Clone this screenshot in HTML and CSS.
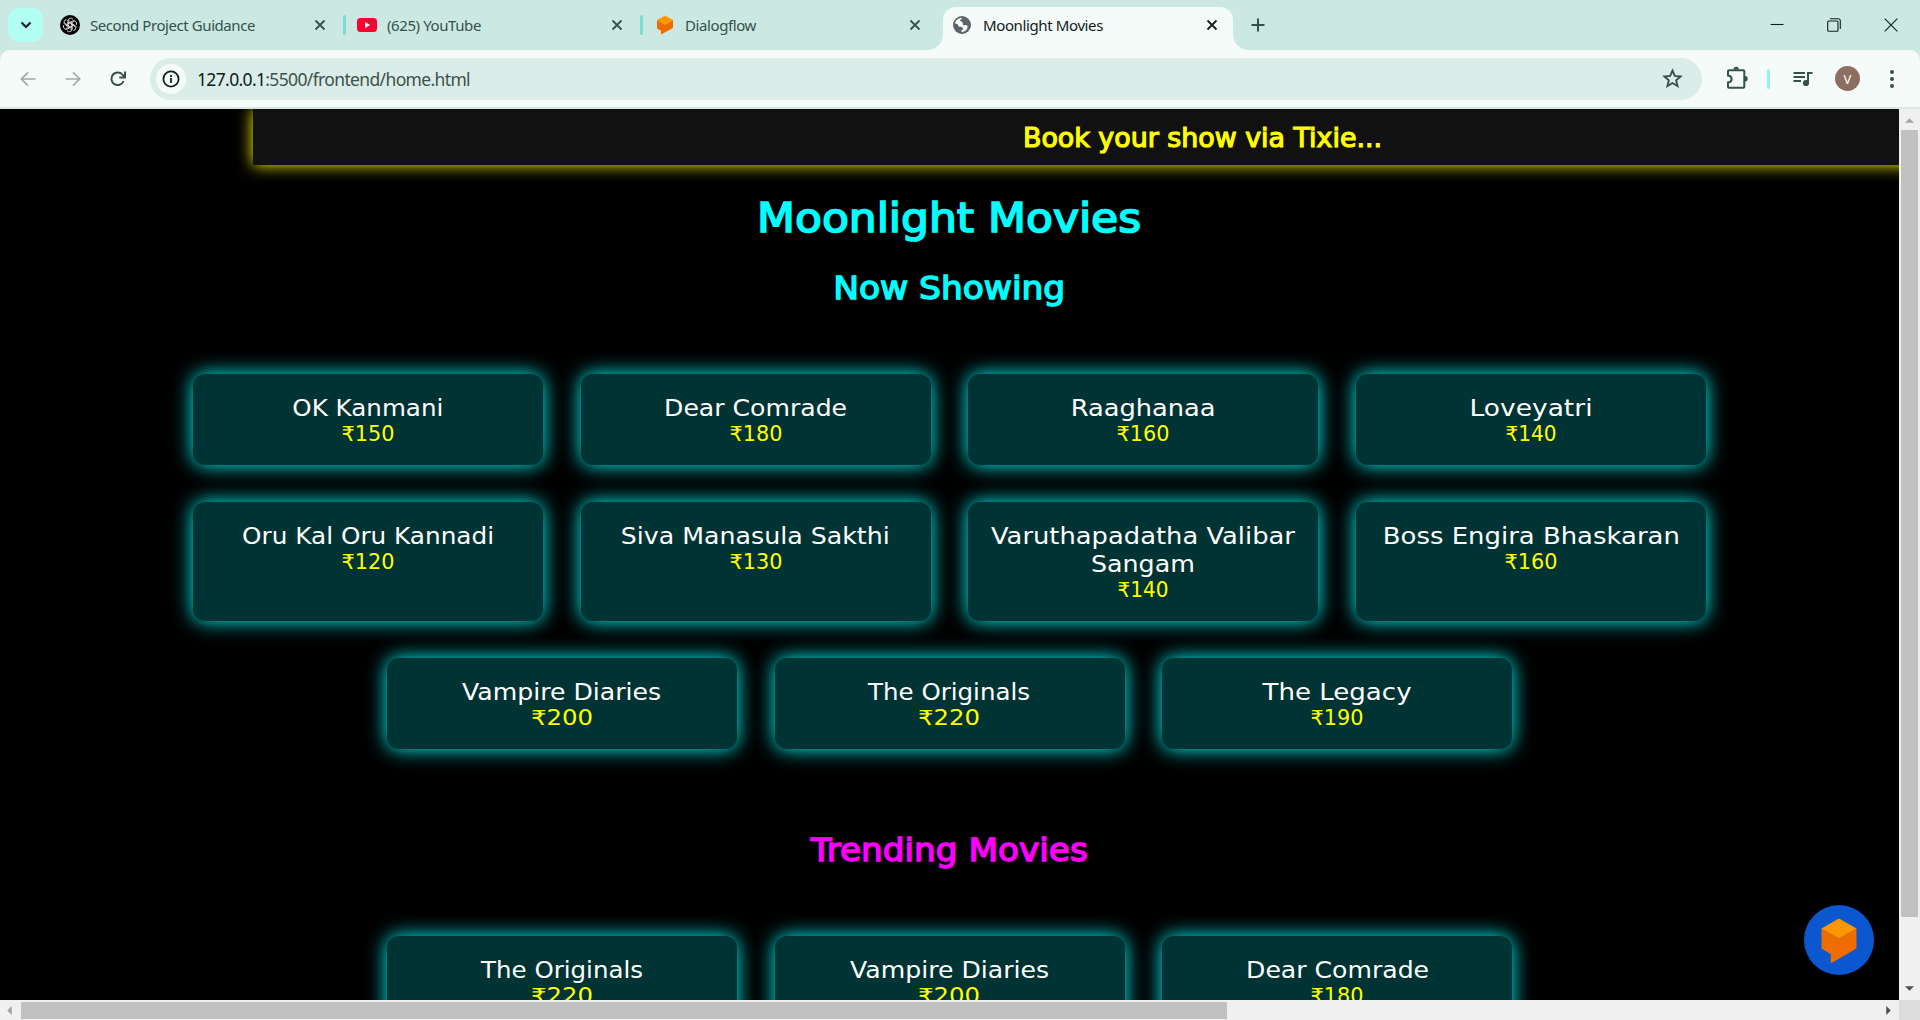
FILE: index.html
```html
<!DOCTYPE html>
<html lang="en">
<head>
<meta charset="utf-8">
<title>Moonlight Movies</title>
<link rel="stylesheet" href="styles.css">
</head>
<body>
<div class="browser">
  <header class="tabbar">
    <div class="tab-search"><svg width="12" height="8" viewBox="0 0 12 8"><path d="M1.5 1.5 6 6l4.5-4.5" fill="none" stroke="#10201c" stroke-width="2.2"/></svg></div>
    <div class="tab">
      <svg class="favicon" viewBox="0 0 20 20"><circle cx="10" cy="10" r="10" fill="#000"/><g fill="none" stroke="#fff" stroke-width=".8"><path id="petal" d="M7.800 11.300V6a2.900 2.900 0 0 1 5.200-1.700M9.800 8.800l4.300-2.500"/><use href="#petal" transform="rotate(60 10 10)"/><use href="#petal" transform="rotate(120 10 10)"/><use href="#petal" transform="rotate(180 10 10)"/><use href="#petal" transform="rotate(240 10 10)"/><use href="#petal" transform="rotate(300 10 10)"/></g></svg>
      <span class="tab-title" data-w="165">Second Project Guidance</span>
      <svg class="close" viewBox="0 0 12 12"><path d="m1.5 1.5 9 9m0-9-9 9"/></svg>
    </div>
    <i class="tab-sep"></i>
    <div class="tab second">
      <svg class="favicon" viewBox="0 0 20 20"><rect y="3" width="20" height="14" rx="3.5" fill="#ff0033"/><path d="m8 7 5.2 3L8 13z" fill="#fff"/></svg>
      <span class="tab-title" data-w="94">(625) YouTube</span>
      <svg class="close" viewBox="0 0 12 12"><path d="m1.5 1.5 9 9m0-9-9 9"/></svg>
    </div>
    <i class="tab-sep"></i>
    <div class="tab third">
      <svg class="favicon" viewBox="0 0 20 20"><path d="M2 5v8.500l4 2.300V19.500L18 13V5l-8 4.500z" fill="#ef6c00"/><path d="m10 .5 8 4.500-8 4.700L2 5z" fill="#ff9800"/></svg>
      <span class="tab-title" data-w="71">Dialogflow</span>
      <svg class="close" viewBox="0 0 12 12"><path d="m1.500 1.500 9 9m0-9-9 9"/></svg>
    </div>
    <div class="tab active">
      <svg class="favicon" viewBox="0 0 20 20"><circle cx="10" cy="10" r="9" fill="#5f6368"/><path d="M3 8.500C3.500 5 6.500 2.700 10.500 3c-1 1-2.500 1.500-2.300 2.800.3 1 2 .6 2.500 1.600.5 1-.6 2 .6 2.600 1.200.5 2-.2 3.200.3 1.200.6 1.500 2 .6 3.400-1.100 1.900-3.100 3.400-6 3.100.3-1.300.7-1.800 1.500-2.300.9-.7.6-2-.6-2.300-1.300-.3-2.300.2-3.200-.7C6 10.500 6.600 8.800 3 8.500z" fill="#f4fbf8"/></svg>
      <span class="tab-title" data-w="120">Moonlight Movies</span>
      <svg class="close" viewBox="0 0 12 12"><path d="m1.500 1.500 9 9m0-9-9 9"/></svg>
    </div>
    <svg class="new-tab" viewBox="0 0 14 14"><path d="M7 .5v13M.5 7h13"/></svg>
    <div class="window-buttons">
      <svg viewBox="0 0 14 14"><path d="M.5 6.500h13"/></svg>
      <svg viewBox="0 0 14 14"><rect x=".7" y="3" width="10.300" height="10.300" rx="1"/><path d="M3 .8h8.300a2 2 0 0 1 2 2V11"/></svg>
      <svg viewBox="0 0 14 14"><path d="m.7.7 12.600 12.600m0-12.600L.7 13.300"/></svg>
    </div>
  </header>

  <div class="toolbar-wrap">
  <div class="toolbar">
    <div class="nav muted"><svg viewBox="0 0 16 16"><path d="M15.500 8H1.500M8 1.300 1.300 8 8 14.700"/></svg></div>
    <div class="nav muted"><svg viewBox="0 0 16 16"><path d="M.5 8h14M8 1.300 14.700 8 8 14.700"/></svg></div>
    <div class="nav"><svg viewBox="0 0 16 16"><path d="M13.600 10A6.300 6.300 0 1 1 12.800 4L14.500 6"/><path d="M15 .5v6H9.300"/></svg></div>
    <div class="address">
      <span class="info"><svg width="18" height="18" viewBox="0 0 18 18"><circle cx="9" cy="9" r="7.600" fill="none" stroke="#10201c" stroke-width="1.800"/><path d="M9 8v5M9 5v1.900" stroke="#10201c" stroke-width="1.800"/></svg></span>
      <span class="url" data-w="273"><b>127.0.0.1</b>:5500/frontend/home.html</span>
      <svg class="star" viewBox="0 0 20 20"><path d="m10 2.500 2.200 5.100 5.500.5-4.200 3.700 1.300 5.400L10 14.300l-4.800 2.900 1.300-5.400L2.300 8.100l5.500-.5z"/></svg>
    </div>
    <svg class="puzzle" viewBox="0 0 24 24"><path d="M4 4.200h14.300a1 1 0 0 1 1 1v15.600a1 1 0 0 1-1 1H4a1 1 0 0 1-1-1v-4.300c4.800-.5 4.800-6.500 0-7V5.200a1 1 0 0 1 1-1z" fill="none" stroke="#34524b" stroke-width="2"/><path d="M8.500 3.500a2.700 2.700 0 0 1 5.400 0zM20 10a2.700 2.700 0 0 1 0 5.400z" fill="#34524b"/></svg>
    <i class="divider"></i>
    <svg class="playlist" viewBox="0 0 20 16"><path d="M.5 2h11.500M.5 6h11.500M.5 10h7.500" stroke="#34524b" stroke-width="2" fill="none"/><path d="M15 11V1.900h4.500" stroke="#34524b" stroke-width="2" fill="none"/><circle cx="13" cy="12" r="3.100" fill="#34524b"/></svg>
    <span class="avatar">V</span>
    <svg class="menu" viewBox="0 0 4 18"><circle cx="2" cy="2" r="2"/><circle cx="2" cy="9" r="2"/><circle cx="2" cy="16" r="2"/></svg>
  </div>
  </div>

  <div class="viewport">
    <main class="page">
      <div class="banner"><span data-w="359">Book your show via Tixie...</span></div>
      <h1><span data-w="384">Moonlight Movies</span></h1>
      <h2 class="now"><span data-w="232">Now Showing</span></h2>
      <section class="cards">
        <article class="card"><span class="name" data-w="151">OK Kanmani</span><span class="price" data-w="53">₹150</span></article>
        <article class="card"><span class="name" data-w="183">Dear Comrade</span><span class="price" data-w="53">₹180</span></article>
        <article class="card"><span class="name" data-w="145">Raaghanaa</span><span class="price" data-w="53">₹160</span></article>
        <article class="card"><span class="name" data-w="123">Loveyatri</span><span class="price" data-w="51">₹140</span></article>
        <article class="card"><span class="name" data-w="252">Oru Kal Oru Kannadi</span><span class="price" data-w="53">₹120</span></article>
        <article class="card"><span class="name" data-w="269">Siva Manasula Sakthi</span><span class="price" data-w="53">₹130</span></article>
        <article class="card"><span class="name" data-w="304">Varuthapadatha Valibar</span><span class="name" data-w="104">Sangam</span><span class="price" data-w="51">₹140</span></article>
        <article class="card"><span class="name" data-w="297">Boss Engira Bhaskaran</span><span class="price" data-w="53">₹160</span></article>
        <article class="card"><span class="name" data-w="199">Vampire Diaries</span><span class="price" data-w="62">₹200</span></article>
        <article class="card"><span class="name" data-w="162">The Originals</span><span class="price" data-w="62">₹220</span></article>
        <article class="card"><span class="name" data-w="149">The Legacy</span><span class="price" data-w="53">₹190</span></article>
      </section>
      <h2 class="trending"><span data-w="277">Trending Movies</span></h2>
      <section class="cards">
        <article class="card"><span class="name" data-w="162">The Originals</span><span class="price" data-w="62">₹220</span></article>
        <article class="card"><span class="name" data-w="199">Vampire Diaries</span><span class="price" data-w="62">₹200</span></article>
        <article class="card"><span class="name" data-w="183">Dear Comrade</span><span class="price" data-w="53">₹180</span></article>
      </section>
      <div class="chat"><svg width="36" height="46" viewBox="0 0 36 46"><path d="M.5 10.500v20.300l9.200 5.200v9.500L35.500 30.600V10.500l-17.500 10z" fill="#ef6c00"/><path d="m18 .5 17.500 10L18 20.600.5 10.500z" fill="#ff9800"/></svg></div>
    </main>
    <div class="vscroll">
      <svg viewBox="0 0 10 5" class="arrow-v dim"><path d="m0 5 5-5 5 5z"/></svg>
      <i class="thumb-v"></i>
      <svg viewBox="0 0 10 5" class="arrow-v"><path d="m0 0 5 5 5-5z"/></svg>
    </div>
  </div>
  <div class="hscroll">
    <svg viewBox="0 0 5 10" class="arrow-h dim"><path d="M5 0 0 5l5 5z"/></svg>
    <i class="thumb-h"></i>
    <svg viewBox="0 0 5 10" class="arrow-h last"><path d="m0 0 5 5-5 5z"/></svg>
    <i class="corner"></i>
  </div>
</div>
<script src="fit.js"></script>
</body>
</html>
```
FILE: styles.css
```css
* { box-sizing: border-box; }
html, body { margin: 0; height: 100%; overflow: hidden; }
body { font-family: "Noto Sans", "Open Sans", sans-serif; }
svg { display: block; flex: none; }

.browser { display: flex; flex-direction: column; width: 1920px; height: 1020px; background: #000; }

/* Tab strip */
.tabbar { display: flex; align-items: center; height: 50px; padding-left: 8px; background: #cce8e2; }
.tab-search { display: flex; align-items: center; justify-content: center; width: 35px; height: 34px; margin-right: 7px; border-radius: 11px; background: #b2fff3; }
.tab { display: flex; align-items: center; width: 293px; height: 50px; padding: 0 17px 0 10px; color: #34524b; }
.tab.second { width: 294px; padding-left: 11px; }
.tab.third { padding: 0 15px 0 12px; }
.tab-sep { width: 3px; height: 20px; border-radius: 2px; background: #7bdcd2; flex: none; }
.favicon { width: 20px; height: 20px; margin-right: 10px; }
.tab-title { font-size: 15px; line-height: 22px; white-space: nowrap; margin-right: auto; }
.close { width: 12px; height: 12px; fill: none; stroke: #34524b; stroke-width: 1.8; }
.tab.active { position: relative; width: 290px; height: 43px; margin-top: 7px; margin-left: 7px; padding: 0 15px 7px 9px; border-radius: 13px 13px 0 0; background: #f4fbf8; color: #10201c; }
.tab.active .favicon { margin-right: 11px; }
.tab.active .close { stroke: #10201c; }
.tab.active::before, .tab.active::after { content: ""; position: absolute; bottom: 0; width: 15px; height: 15px; }
.tab.active::before { left: -15px; background: radial-gradient(circle at 0 0, transparent 14.5px, #f4fbf8 15px); }
.tab.active::after { right: -15px; background: radial-gradient(circle at 100% 0, transparent 14.5px, #f4fbf8 15px); }
.new-tab { width: 14px; height: 14px; margin-left: 18px; fill: none; stroke: #34524b; stroke-width: 2; }
.window-buttons { display: flex; gap: 43px; margin-left: auto; padding-right: 22px; }
.window-buttons svg { width: 14px; height: 14px; fill: none; stroke: #10201c; stroke-width: 1.1; }

/* Toolbar */
.toolbar-wrap { height: 59px; background: #cce8e2; flex: none; }
.toolbar { display: flex; align-items: center; height: 59px; padding-left: 5px; border-bottom: 2px solid #d9e6e1; border-radius: 10px 10px 0 0; background: #f4fbf8; }
.nav { display: flex; justify-content: center; width: 45px; flex: none; }
.nav svg { width: 16px; height: 16px; fill: none; stroke: #34524b; stroke-width: 2; }
.nav.muted svg { stroke: #a1aba8; stroke-width: 1.7; }
.address { display: flex; align-items: center; width: 1552px; height: 42px; margin-left: 10px; padding: 0 19px 0 6px; border-radius: 21px; background: #daede8; }
.info { display: flex; align-items: center; justify-content: center; width: 30px; height: 30px; margin-right: 11px; border-radius: 50%; background: #f4fbf8; }
.url { font-size: 17.5px; line-height: 26px; white-space: nowrap; color: #40504c; }
.url b { font-weight: 400; color: #10201c; }
.star { width: 21px; height: 21px; margin-left: auto; fill: none; stroke: #3d4d49; stroke-width: 1.8; }
.puzzle { width: 24px; height: 24px; margin-left: 23px; margin-top: -2px; }
.divider { width: 3px; height: 20px; margin-left: 18px; border-radius: 2px; background: #95f5ea; flex: none; }
.playlist { width: 20px; height: 16px; margin-left: 23px; }
.avatar { display: flex; align-items: center; justify-content: center; width: 25px; height: 25px; margin-left: 22px; border-radius: 50%; background: #8d6e63; color: #fff; font-size: 13px; flex: none; }
.menu { width: 4px; height: 18px; margin-left: 30px; fill: #34524b; }

/* Page */
.viewport { display: flex; height: 891px; flex: none; }
.page { position: relative; width: 1899px; height: 891px; overflow: hidden; background: #000; font-family: "DejaVu Sans", sans-serif; text-align: center; white-space: nowrap; }
.page [data-w] { display: inline-block; }
.banner { width: 1899px; height: 56px; margin-left: 253px; padding-top: 2px; background: #111; box-shadow: 0 0 15px #ff0; color: #ff0; font-size: 27px; line-height: 53px; -webkit-text-stroke: 1.2px #ff0; }
h1, h2 { margin: 0; font-weight: 400; }
h1 { padding-top: 28px; font-size: 41px; line-height: 50px; color: #0ff; -webkit-text-stroke: 1.7px #0ff; }
h2 { font-size: 31.500px; line-height: 40px; -webkit-text-stroke: 1.4px currentColor; }
.now { padding-top: 25px; color: #0ff; }
.trending { padding-top: 81px; color: #f0f; }
.cards { display: flex; flex-wrap: wrap; justify-content: center; gap: 37px 37.600px; padding-top: 66px; }
.card { display: flex; flex-direction: column; align-items: center; width: 350px; min-height: 91px; padding: 20px 0 18px; border-radius: 12px; background: #033; box-shadow: 0 0 20px #0ff; }
.name { font-size: 22.400px; line-height: 28px; color: #fff; }
.price { font-size: 20.500px; line-height: 25px; color: #ff0; }
.chat { position: absolute; right: 25px; bottom: 25px; display: flex; align-items: center; justify-content: center; width: 70px; height: 70px; padding-top: 2px; border-radius: 50%; background: #0b57d0; }

/* Scrollbars */
.vscroll { display: flex; flex-direction: column; align-items: center; width: 21px; height: 891px; padding: 9px 0; background: #f0f0f0; }
.thumb-v { width: 17px; height: 787px; margin-top: 7px; background: #c1c1c1; flex: none; }
.arrow-v { width: 9px; height: 5px; fill: #505050; }
.arrow-v:last-child { margin-top: auto; }
.hscroll { display: flex; align-items: center; height: 20px; padding-left: 7px; background: #f0f0f0; }
.thumb-h { width: 1206px; height: 17px; margin-left: 9px; margin-top: 1px; background: #c1c1c1; flex: none; }
.arrow-h { width: 5px; height: 9px; fill: #505050; }
.arrow-h.last { margin-left: auto; margin-right: 8px; }
.dim { fill: #a3a3a3; }
.corner { width: 21px; height: 20px; background: #dcdcdc; }
```
FILE: fit.js
```js
// Fit each label to its set width: page text is widened, browser text is tracked.
document.querySelectorAll('[data-w]').forEach(function (el) {
  var natural = el.getBoundingClientRect().width;
  if (el.closest('.page')) {
    el.style.transform = 'scaleX(' + el.dataset.w / natural + ')';
  } else {
    el.style.letterSpacing = (el.dataset.w - natural) / el.textContent.length + 'px';
  }
});
```
